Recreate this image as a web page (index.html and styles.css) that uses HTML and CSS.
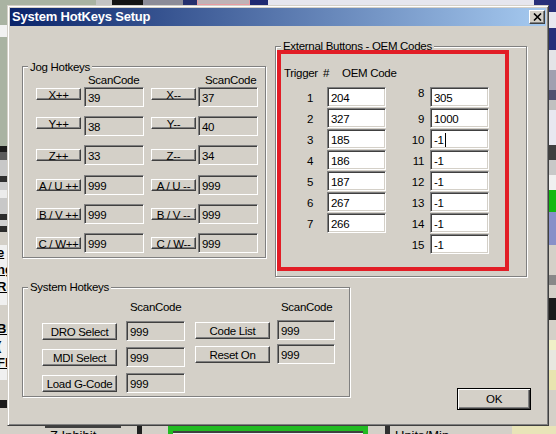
FILE: index.html
```html
<!DOCTYPE html>
<html lang="en">
<head>
  <meta charset="UTF-8" />
  <title>System HotKeys Setup</title>
  <link rel="stylesheet" href="styles.css">
</head>
<body>

<div class="desk">
  <!-- bits of the app window behind the dialog -->
  <div class="bg bg-green"></div>
  <div class="bg bg-white"></div>
  <div class="bg top-check"></div>
  <div class="bg top-black"></div>
  <div class="bg top-gray"></div>
  <div class="bg top-navy1"></div>
  <div class="bg top-pink"></div>
  <div class="bg top-navy2"></div>
  <div class="bg top-light"></div>
  <div class="bg top-navy3"></div>
  <div class="bg left-bands"></div>
  <div class="bg left-text">
    <span>e</span><span>ng</span><span>Re</span><span class="gap">Bl</span><span>(</span><span>Fl</span>
  </div>
  <div class="bg right-bands"></div>
  <div class="bg bot-line"></div>
  <div class="bg bot-bar1"></div>
  <div class="bg bot-green"></div>
  <div class="bg bot-bar2"></div>
  <div class="bg bot-yellow"></div>
  <span class="bg bot-text zinh">Z Inhibit</span>
  <span class="bg bot-text units">Units/Min</span>

  <div class="dialog">
    <div class="titlebar">
      <span class="title">System HotKeys Setup</span>
      <span class="close">
        <svg width="9" height="8" viewBox="0 0 9 8"><path d="M1 0.5 L8 7.5 M8 0.5 L1 7.5" stroke="#000" stroke-width="1.6" fill="none"/></svg>
      </span>
    </div>

    <div class="client">
      <div class="top-row">

        <div class="group jog">
          <span class="legend">Jog Hotkeys</span>
          <div class="jog-head"><span>ScanCode</span><span>ScanCode</span></div>
          <div class="jog-rows">
            <div class="jog-row lift">
              <div class="btn jbtn">X++</div><div class="field jf1">39</div>
              <div class="btn jbtn jb2">X--</div><div class="field jf2">37</div>
            </div>
            <div class="jog-row lift">
              <div class="btn jbtn">Y++</div><div class="field jf1">38</div>
              <div class="btn jbtn jb2">Y--</div><div class="field jf2">40</div>
            </div>
            <div class="jog-row">
              <div class="btn jbtn">Z++</div><div class="field jf1">33</div>
              <div class="btn jbtn jb2">Z--</div><div class="field jf2">34</div>
            </div>
            <div class="jog-row">
              <div class="btn jbtn">A / U ++</div><div class="field jf1">999</div>
              <div class="btn jbtn jb2">A / U --</div><div class="field jf2">999</div>
            </div>
            <div class="jog-row">
              <div class="btn jbtn">B / V ++</div><div class="field jf1">999</div>
              <div class="btn jbtn jb2">B / V --</div><div class="field jf2">999</div>
            </div>
            <div class="jog-row">
              <div class="btn jbtn">C / W++</div><div class="field jf1">999</div>
              <div class="btn jbtn jb2">C / W--</div><div class="field jf2">999</div>
            </div>
          </div>
        </div>

        <div class="group ext">
          <span class="legend">External Buttons - OEM Codes</span>
          <div class="ext-head"><span class="trig">Trigger</span><span class="hash">#</span><span>OEM Code</span></div>
          <div class="ext-cols">
            <div class="ext-col">
              <div class="ext-row"><span class="num">1</span><div class="field white">204</div></div>
              <div class="ext-row"><span class="num">2</span><div class="field white">327</div></div>
              <div class="ext-row"><span class="num">3</span><div class="field white">185</div></div>
              <div class="ext-row"><span class="num">4</span><div class="field white">186</div></div>
              <div class="ext-row"><span class="num">5</span><div class="field white">187</div></div>
              <div class="ext-row"><span class="num">6</span><div class="field white">267</div></div>
              <div class="ext-row"><span class="num">7</span><div class="field white">266</div></div>
            </div>
            <div class="ext-col right">
              <div class="ext-row"><span class="num hi">8</span><div class="field white">305</div></div>
              <div class="ext-row"><span class="num">9</span><div class="field white">1000</div></div>
              <div class="ext-row"><span class="num">10</span><div class="field white">-1<span class="caret"></span></div></div>
              <div class="ext-row"><span class="num">11</span><div class="field white">-1</div></div>
              <div class="ext-row"><span class="num">12</span><div class="field white">-1</div></div>
              <div class="ext-row"><span class="num">13</span><div class="field white">-1</div></div>
              <div class="ext-row"><span class="num">14</span><div class="field white">-1</div></div>
              <div class="ext-row"><span class="num">15</span><div class="field white">-1</div></div>
            </div>
          </div>
        </div>

      </div>

      <div class="bottom-row">
        <div class="group sys">
          <span class="legend">System Hotkeys</span>
          <div class="sys-col a">
            <div class="sys-head">ScanCode</div>
            <div class="sys-rows">
              <div class="sys-row"><div class="btn sbtn">DRO Select</div><div class="field">999</div></div>
              <div class="sys-row"><div class="btn sbtn">MDI Select</div><div class="field">999</div></div>
              <div class="sys-row"><div class="btn sbtn">Load G-Code</div><div class="field">999</div></div>
            </div>
          </div>
          <div class="sys-col b">
            <div class="sys-head">ScanCode</div>
            <div class="sys-rows">
              <div class="sys-row"><div class="btn sbtn">Code List</div><div class="field">999</div></div>
              <div class="sys-row"><div class="btn sbtn">Reset On</div><div class="field">999</div></div>
            </div>
          </div>
        </div>
        <div class="btn ok">OK</div>
      </div>
    </div>
  </div>

  <div class="mark"></div>
</div>

</body>
</html>
```

FILE: styles.css
```css
* {
  box-sizing: border-box;
}

body {
  margin: 0;
  background: #d4d0c8;
  font-family: "Liberation Sans", Arial, sans-serif;
  font-size: 11.5px;
  letter-spacing: -0.3px;
  color: #000;
}

.desk {
  position: relative;
  width: 556px;
  height: 434px;
  overflow: hidden;
  background: #d4d0c8;
}

/* background app pieces */
.bg {
  position: absolute;
}

.bg-green { left: 0; top: 0; width: 96px; height: 146px; background: #a9b3a2; }
.bg-white { left: 0; top: 25px; width: 8px; height: 12px; background: #f2f2f2; }
.top-check { left: 96px; top: 0; width: 16px; height: 5px; background: #c4c4c4; }
.top-black { left: 112px; top: 0; width: 31px; height: 5px; background: #141414; }
.top-gray { left: 143px; top: 0; width: 40px; height: 5px; background: #8c8c98; }
.top-navy1 { left: 183px; top: 0; width: 14px; height: 5px; background: #25306e; }
.top-pink { left: 197px; top: 0; width: 53px; height: 5px; background: #bfb3b6; border: 1px solid #e89aa2; border-top: 0; }
.top-navy2 { left: 250px; top: 0; width: 18px; height: 5px; background: #1f2a72; }
.top-light { left: 268px; top: 0; width: 266px; height: 5px; background: #e6e6ee; }
.top-navy3 { left: 534px; top: 0; width: 22px; height: 5px; background: #28307a; }

.left-bands {
  left: 0;
  top: 146px;
  width: 8px;
  height: 280px;
  background: linear-gradient(#1c1c1c 0 6px, #5c5c5c 6px 14px, #c8c8c8 14px 30px, #303030 30px 36px,
    #cfcfcf 36px 44px, #ececec 44px 52px, #c8c8c8 52px 68px, #2c2c2c 68px 74px, #d0d0d0 74px 80px,
    #2c2c2c 80px 86px, #d4d0c8 86px 99px, #f0f0f0 99px 159px, #d4d0c8 159px 184px,
    #f0f0f0 184px 234px, #d4d0c8 234px 254px, #1c1c1c 254px 262px, #d4d0c8 262px);
}

.left-text {
  left: -3px;
  top: 244px;
  width: 11px;
  display: flex;
  flex-direction: column;
  font-weight: bold;
  font-size: 13px;
  letter-spacing: 0;
  line-height: 17px;
  text-decoration: underline;
}

.left-text .gap {
  margin-top: 25px;
}

.right-bands {
  left: 549px;
  top: 5px;
  width: 7px;
  height: 429px;
  background: linear-gradient(#28307a 0 7px, #e8e8f0 7px 23px, #28307a 23px 45px, #e4e4e8 45px 65px,
    #a0a0b0 65px 85px, #505070 85px 95px, #c0c0c0 95px 105px, #e8e8f0 105px 140px, #404040 140px 155px,
    #c8c8c8 155px 170px, #f0f0f0 170px 185px, #12b812 185px 207px, #8890c8 207px 240px,
    #d4d0c8 240px 270px, #888 270px 280px, #d4d0c8 280px 293px, #1c1c1c 293px 315px,
    #d4d0c8 315px 335px, #f0f0c8 335px 345px, #e8e8e0 345px 365px, #e8e4b0 365px 385px, #d4d0c8 385px);
}

.bot-line { left: 45px; top: 426px; width: 76px; height: 2px; background: #404040; }
.bot-bar1 { left: 137px; top: 426px; width: 5px; height: 8px; background: #202020; }
.bot-green { left: 168px; top: 426px; width: 200px; height: 8px; background: #f0f0f0; border: 5px solid #22bb22; border-bottom: 0; box-shadow: inset 0 2px #404040; }
.bot-bar2 { left: 385px; top: 426px; width: 5px; height: 8px; background: #303030; }
.bot-yellow { left: 512px; top: 426px; width: 44px; height: 8px; background: #e8e4b8; }

.bot-text {
  top: 428px;
  font-size: 13px;
  letter-spacing: 0;
  line-height: 15px;
}

.zinh { left: 50px; }
.units { left: 395px; }

/* dialog window */
.dialog {
  position: absolute;
  left: 7px;
  top: 5px;
  width: 542px;
  height: 421px;
  padding: 2px;
  background: #d4d0c8;
  border: 1px solid;
  border-color: #d4d0c8 #404040 #404040 #d4d0c8;
  box-shadow: inset 1px 1px #fff, inset -1px -1px #808080;
}

.titlebar {
  display: flex;
  align-items: flex-start;
  height: 18px;
  padding-left: 2px;
  background: linear-gradient(to right, #0a246a, #a6caf0);
}

.title {
  flex: 1;
  color: #fff;
  font-weight: bold;
  font-size: 13px;
  line-height: 18px;
  letter-spacing: -0.2px;
}

.close {
  display: flex;
  align-items: center;
  justify-content: center;
  width: 16px;
  height: 14px;
  margin: 2px 1px 0 0;
  background: #d4d0c8;
  border: 1px solid;
  border-color: #fff #404040 #404040 #fff;
  box-shadow: inset -1px -1px #808080;
}

/* group boxes */
.group {
  position: relative;
  border: 1px solid #808080;
  box-shadow: inset 1px 1px #fff, 1px 1px #fff;
}

.legend {
  position: absolute;
  top: -8px;
  left: 5px;
  padding: 0 2px;
  background: #d4d0c8;
  line-height: 15px;
  white-space: nowrap;
}

.jog .legend {
  top: -7px;
}

.top-row,
.bottom-row {
  display: flex;
  align-items: flex-start;
}

.bottom-row {
  margin-top: 10px;
}

/* controls */
.btn {
  background: #d4d0c8;
  border: 1px solid;
  border-color: #fff #404040 #404040 #fff;
  box-shadow: inset -1px -1px #808080;
  text-align: center;
  white-space: nowrap;
  overflow: hidden;
}

.field {
  height: 20px;
  padding: 2px 0 0 3px;
  background: #d4d0c8;
  border: 1px solid;
  border-color: #808080 #fff #fff #808080;
  box-shadow: inset 1px 1px #404040, inset -1px -1px #d4d0c8;
  line-height: 16px;
  white-space: nowrap;
  overflow: hidden;
}

.field.white {
  background: #fff;
}

.caret {
  display: inline-block;
  width: 1px;
  height: 14px;
  margin-left: 1px;
  background: #000;
  vertical-align: -3px;
}

/* jog hotkeys */
.jog {
  width: 244px;
  height: 192px;
  margin: 40px 0 0 12px;
  padding: 6px 0 0 13px;
}

.jog-head {
  display: flex;
  height: 14px;
  padding-left: 52px;
  line-height: 15px;
}

.jog-head span {
  flex-shrink: 0;
}

.jog-head span:first-child {
  width: 117px;
}

.jog-rows {
  display: flex;
  flex-direction: column;
  row-gap: 9.2px;
}

.jog-row {
  display: flex;
  align-items: flex-start;
  height: 20px;
}

.jbtn {
  width: 45px;
  height: 12px;
  margin-top: 4px;
  line-height: 12px;
}

.jog-row.lift .jbtn {
  margin-top: 1px;
}

.jf1 {
  width: 60px;
  margin-left: 3px;
}

.jb2 {
  margin-left: 7px;
}

.jf2 {
  width: 60px;
  margin-left: 2px;
}

/* external buttons */
.ext {
  width: 252px;
  height: 231px;
  margin: 20px 0 0 9px;
  padding: 19px 0 0 7px;
}

.ext-head {
  display: flex;
  height: 15px;
  padding-left: 1px;
  line-height: 15px;
}

.trig {
  width: 39px;
}

.hash {
  width: 19px;
}

.ext-cols {
  display: flex;
  align-items: flex-start;
  margin-top: 6px;
}

.ext-col {
  display: flex;
  flex-direction: column;
  row-gap: 1px;
}

.ext-row {
  display: flex;
  align-items: flex-start;
  height: 20px;
}

.ext-row .field {
  width: 59px;
}

.num {
  width: 30px;
  margin-right: 14px;
  padding-top: 1px;
  text-align: right;
  line-height: 20px;
}

.ext-col.right .num {
  width: 38px;
  margin-right: 6px;
}

.num.hi {
  padding-top: 0;
  line-height: 12px;
}

/* system hotkeys */
.sys {
  display: flex;
  width: 328px;
  height: 110px;
  margin-left: 12px;
  padding: 12px 0 0 19px;
}

.sys-col {
  display: flex;
  flex-direction: column;
}

.sys-col.a {
  width: 143px;
  margin-right: 10px;
}

.sys-head {
  height: 15px;
  line-height: 15px;
}

.sys-col.a .sys-head {
  padding-left: 88px;
}

.sys-col.b .sys-head {
  padding-left: 86px;
}

.sys-rows {
  display: flex;
  flex-direction: column;
  row-gap: 6px;
  margin-top: 6px;
}

.sys-col.b .sys-rows {
  row-gap: 4px;
  margin-top: 5px;
}

.sys-row {
  display: flex;
  align-items: center;
  height: 20px;
}

.sbtn {
  width: 75px;
  height: 17px;
  padding-top: 1px;
  line-height: 15px;
}

.sys-col.a .field {
  width: 59px;
  margin-left: 9px;
}

.sys-col.b .field {
  width: 58px;
  margin-left: 7px;
}

.ok {
  width: 74px;
  height: 22px;
  margin: 101px 0 0 107px;
  border: 1px solid #000;
  box-shadow: inset 1px 1px #fff, inset -1px -1px #404040, inset -2px -2px #808080;
  line-height: 20px;
}

/* red annotation box */
.mark {
  position: absolute;
  left: 277px;
  top: 50px;
  width: 232px;
  height: 221px;
  border: 4px solid #e21d26;
}
```
